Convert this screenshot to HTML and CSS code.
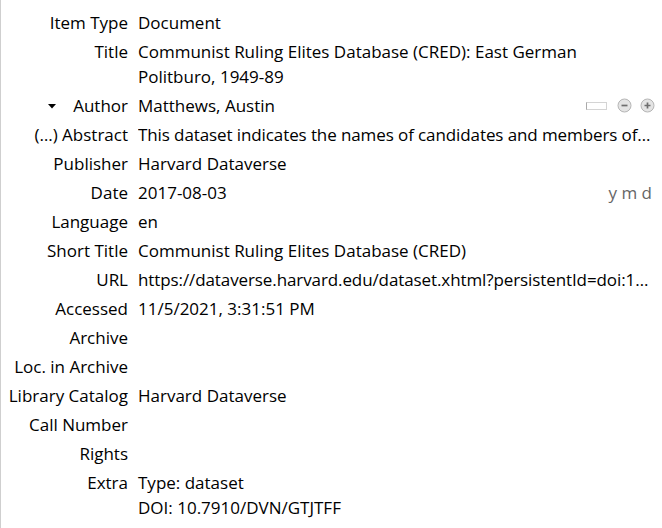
FILE: index.html
```
<!DOCTYPE html>
<html>
<head>
<meta charset="utf-8">
<link rel="stylesheet" href="styles.css">
</head>
<body>
<div class="pane">
  <div class="row"><div class="label">Item Type</div><div class="value">Document</div></div>
  <div class="row"><div class="label">Title</div><div class="value wrap">Communist Ruling Elites Database (CRED): East German Politburo, 1949-89</div></div>
  <div class="row"><div class="label"><svg class="twisty" width="8" height="5" viewBox="0 0 8 5"><path d="M0 0H8L4 4.5Z" fill="#000"/></svg>Author</div><div class="value creator"><span class="cname">Matthews, Austin</span><span class="controls"><span class="box"></span><svg width="15" height="15" viewBox="0 0 15 15"><circle cx="7.5" cy="7.5" r="6.5" fill="#e4e4e4" stroke="#b5b5b5"/><path d="M4.5 7.5H10.5" stroke="#6e6e6e" stroke-width="1.7"/></svg><svg width="15" height="15" viewBox="0 0 15 15"><circle cx="7.5" cy="7.5" r="6.5" fill="#e4e4e4" stroke="#b5b5b5"/><path d="M4.5 7.5H10.5M7.5 4.5V10.5" stroke="#6e6e6e" stroke-width="1.7"/></svg></span></div></div>
  <div class="row"><div class="label">(…) Abstract</div><div class="value trunc">This dataset indicates the names of candidates and members of the Politburo of the Socialist Unity Party of Germany</div></div>
  <div class="row"><div class="label">Publisher</div><div class="value">Harvard Dataverse</div></div>
  <div class="row"><div class="label">Date</div><div class="value date"><span>2017-08-03</span><span class="ymd">y m d</span></div></div>
  <div class="row"><div class="label">Language</div><div class="value">en</div></div>
  <div class="row"><div class="label">Short Title</div><div class="value">Communist Ruling Elites Database (CRED)</div></div>
  <div class="row"><div class="label">URL</div><div class="value trunc">https://dataverse.harvard.edu/dataset.xhtml?persistentId=doi:10.7910/DVN/GTJTFF</div></div>
  <div class="row"><div class="label">Accessed</div><div class="value">11/5/2021, 3:31:51 PM</div></div>
  <div class="row"><div class="label">Archive</div><div class="value"></div></div>
  <div class="row"><div class="label">Loc. in Archive</div><div class="value"></div></div>
  <div class="row"><div class="label">Library Catalog</div><div class="value">Harvard Dataverse</div></div>
  <div class="row"><div class="label">Call Number</div><div class="value"></div></div>
  <div class="row"><div class="label">Rights</div><div class="value"></div></div>
  <div class="row"><div class="label">Extra</div><div class="value wrap">Type: dataset<br>DOI: 10.7910/DVN/GTJTFF</div></div>
</div>
</body>
</html>
```
FILE: styles.css
```
html, body {
  margin: 0;
  padding: 0;
  background: #fff;
}
body {
  font-family: "Open Sans", "Noto Sans", sans-serif;
  font-size: 17px;
  color: #000;
}
.pane {
  box-sizing: border-box;
  width: 662px;
  height: 528px;
  border-left: 1px solid #cfcfcf;
  padding-top: 8px;
  display: grid;
  grid-template-columns: 127px 1fr;
  column-gap: 10px;
  align-content: start;
}
.row {
  display: contents;
}
.label, .value {
  line-height: 25px;
  padding: 2px 0;
  white-space: nowrap;
}
.label {
  text-align: right;
  display: flex;
  justify-content: flex-end;
  align-items: center;
  align-self: start;
  height: 25px;
}
.value {
  min-width: 0;
  padding-right: 10px;
}
.wrap {
  white-space: normal;
}
.trunc {
  overflow: hidden;
  text-overflow: ellipsis;
  letter-spacing: -0.1px;
}
.twisty {
  margin-right: 17px;
  margin-top: 2px;
}
.creator, .date {
  display: flex;
  justify-content: space-between;
  align-items: center;
}
.controls {
  display: flex;
  align-items: center;
  gap: 8px;
  margin-right: -4px;
}
.box {
  width: 19px;
  height: 6px;
  border: 1px solid #d4d4d4;
  border-left: 1px solid #aaa;
  background: #fff;
  margin-right: 2px;
}
.creator .controls {
  margin-right: -3px;
}
.ymd {
  color: #666;
  margin-right: 0;
}
```
